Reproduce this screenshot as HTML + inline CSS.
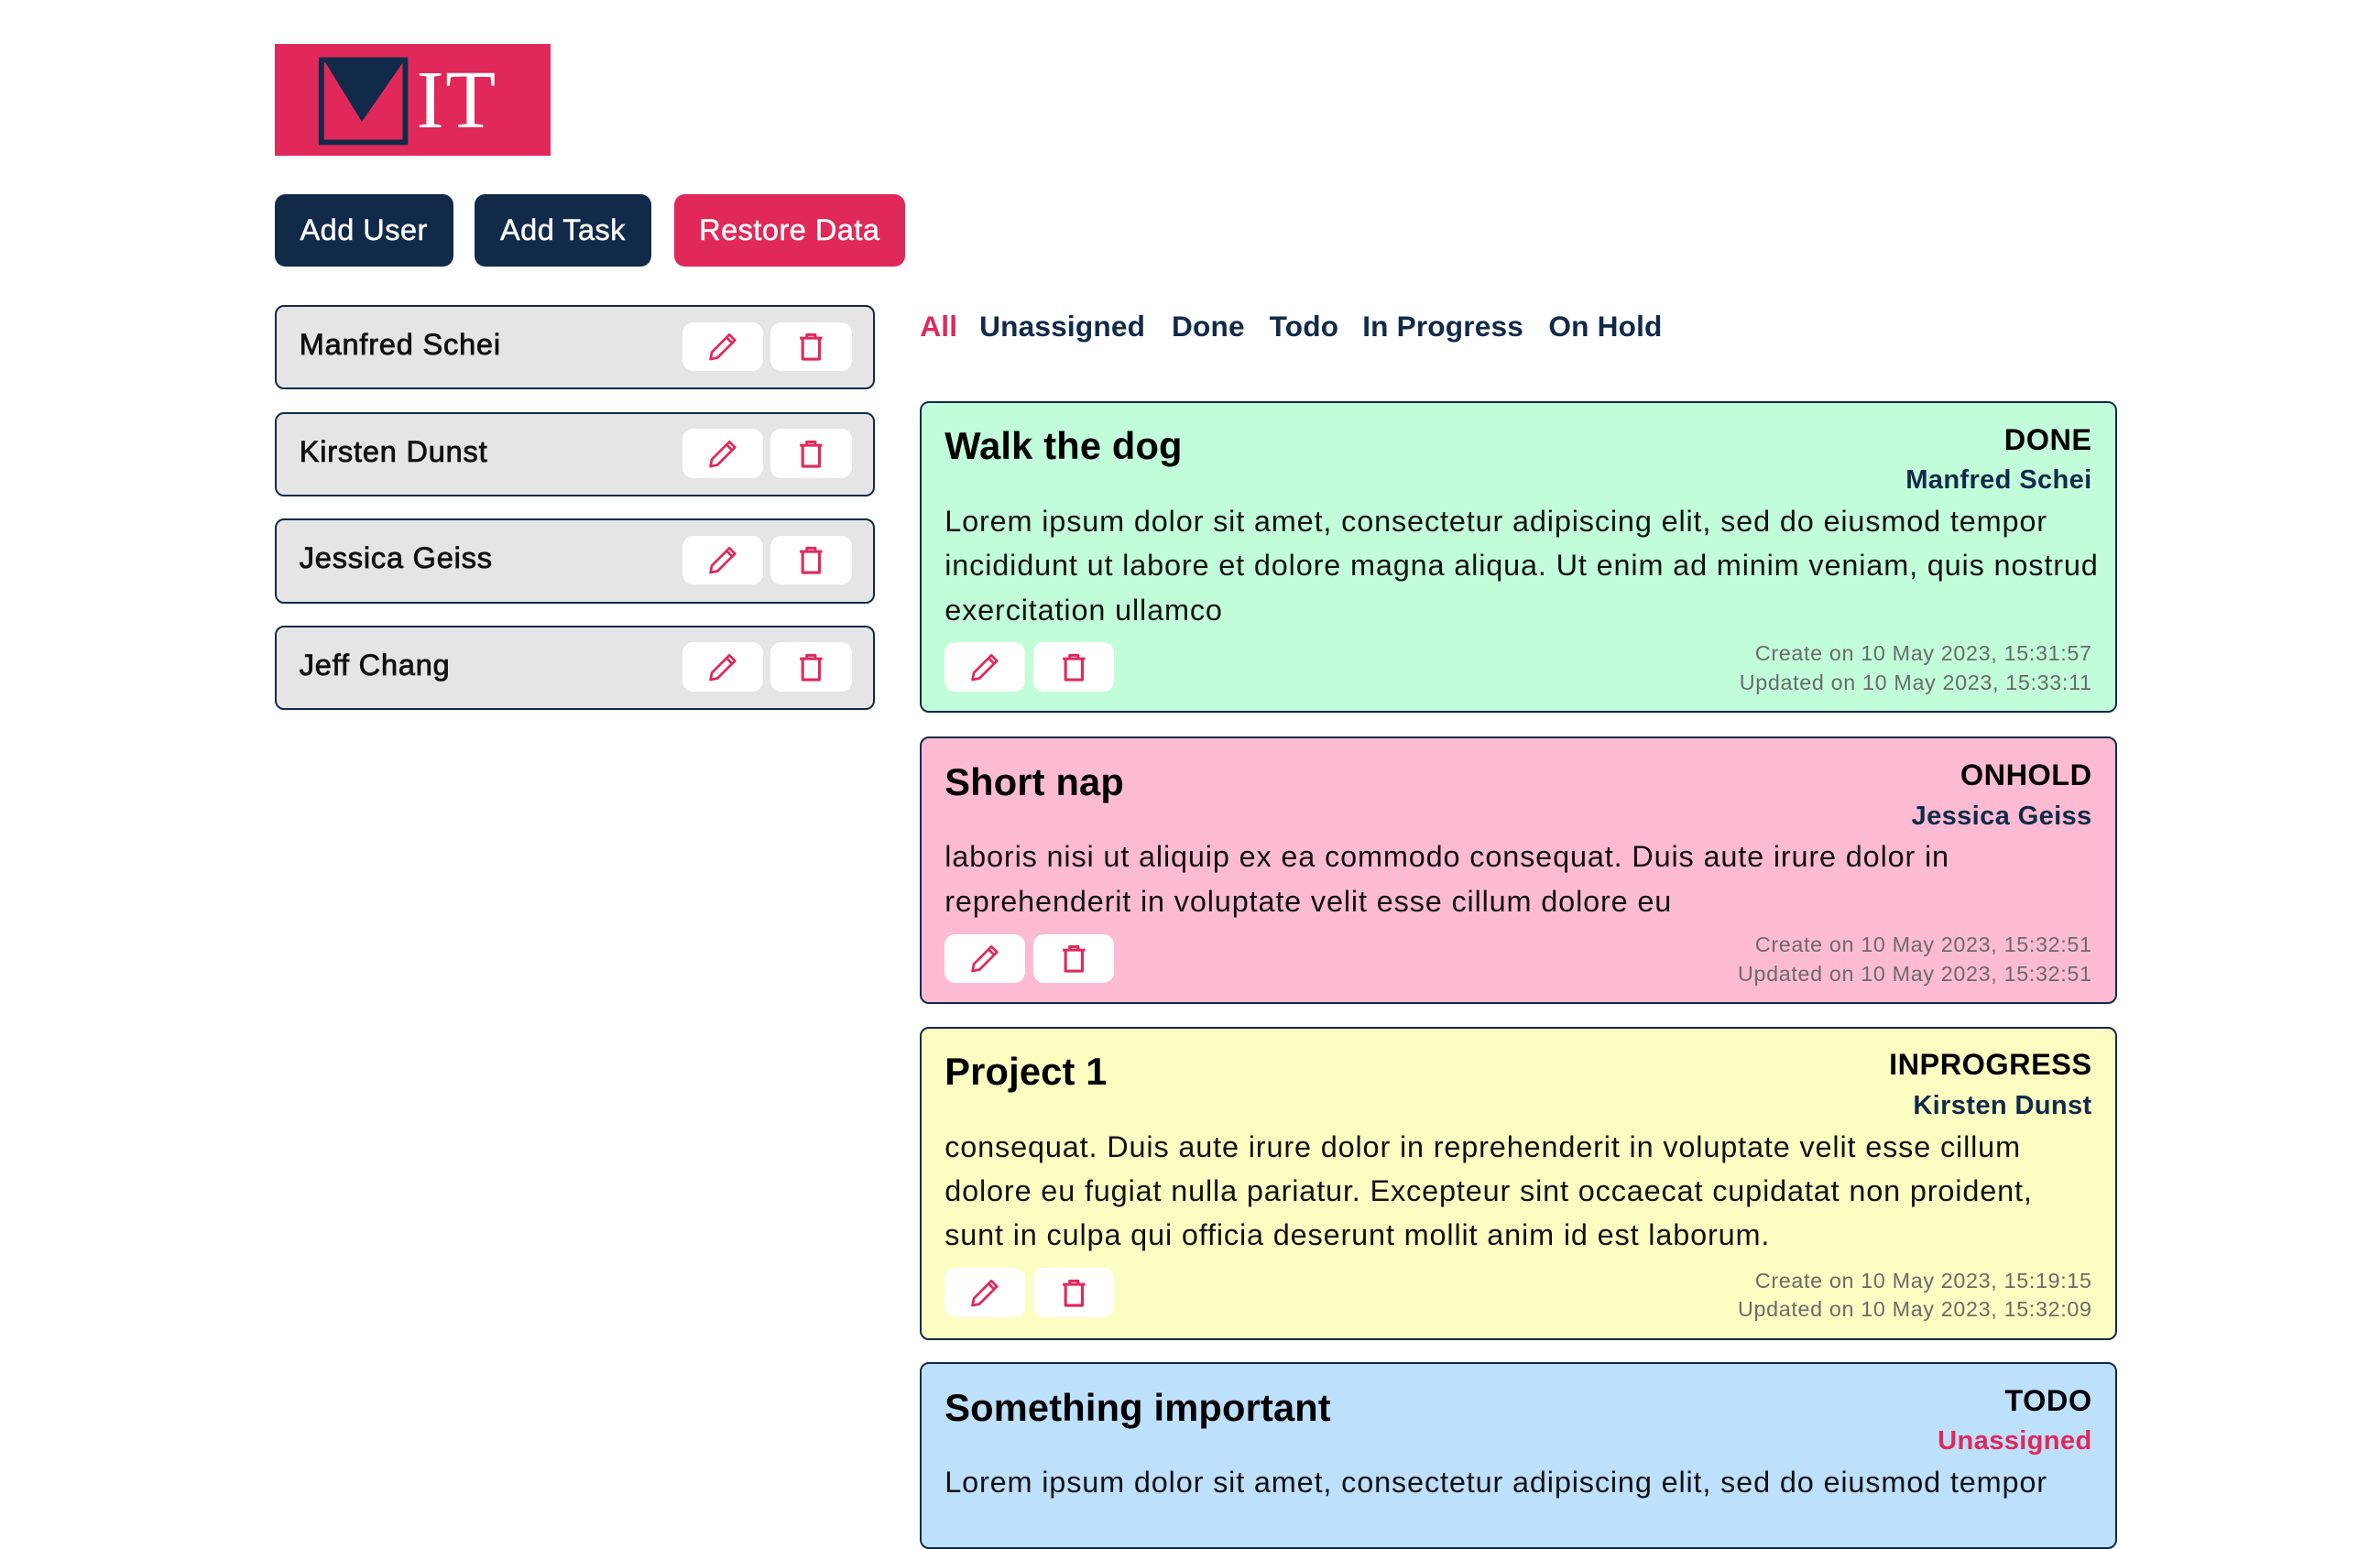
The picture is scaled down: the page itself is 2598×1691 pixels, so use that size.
<!DOCTYPE html>
<html><head><meta charset="utf-8"><style>
html,body{margin:0;padding:0;background:#fff;}
body{width:2598px;height:1602px;overflow:hidden;}
#w{zoom:1.6654;position:relative;width:1560px;height:962px;font-family:"Liberation Sans",sans-serif;color:#000;}
.a{position:absolute;white-space:nowrap;}
.btn{position:absolute;top:127px;height:48px;border-radius:7px;color:#fff;font-size:19.5px;line-height:48px;text-align:center;letter-spacing:0.3px;-webkit-text-stroke:0.3px #fff}
.user{position:absolute;left:180px;width:391px;height:53px;background:#e5e5e5;border:1.5px solid #112a4a;border-radius:6px;}
.user .n{position:absolute;left:15px;top:0;line-height:50px;font-size:19.5px;color:#111;letter-spacing:0.5px;-webkit-text-stroke:0.5px #111}
.ib{position:absolute;width:53px;height:32px;background:#fff;border-radius:7px;display:flex;align-items:center;justify-content:center;}
.tab{position:absolute;top:203px;font-size:19px;font-weight:bold;color:#112a4a;letter-spacing:0.1px}
.card{position:absolute;left:603px;width:782px;border:1.5px solid #112a4a;border-radius:6px;overflow:hidden;}
.t{position:absolute;left:15px;top:14px;font-size:25px;font-weight:bold;letter-spacing:0.1px;}
.s{position:absolute;right:15px;top:13px;font-size:19.5px;font-weight:bold;letter-spacing:0.3px}
.as{position:absolute;right:15px;top:41px;font-size:17.5px;color:#112a4a;font-weight:bold;letter-spacing:0.2px}
.b{position:absolute;left:15px;top:63px;font-size:19.5px;line-height:29px;white-space:nowrap;letter-spacing:0.5px;color:#111}
.d{position:absolute;right:15px;font-size:14px;line-height:19px;color:#6b6b6b;text-align:right;letter-spacing:0.4px}
</style></head><body><div id="w">
<div class="a" style="left:180px;top:29px;width:181px;height:73px;background:#e0295a;">
<svg width="181" height="73" style="position:absolute;left:0;top:0">
<rect x="30.5" y="10.5" width="55" height="54" fill="none" stroke="#112a4a" stroke-width="3.5"/>
<polygon points="33,12 84,12 57,51" fill="#112a4a"/>
</svg>
<div class="a" style="left:93px;top:7px;font-family:'Liberation Serif',serif;font-size:54px;color:#fff;line-height:60px;letter-spacing:1px">IT</div>
</div>
<div class="btn" style="left:180px;width:117px;background:#112a4a">Add User</div>
<div class="btn" style="left:311px;width:116px;background:#112a4a">Add Task</div>
<div class="btn" style="left:442px;width:151px;background:#e0295a">Restore Data</div>

<svg width="0" height="0" style="position:absolute"><defs>
<symbol id="pen" viewBox="0 0 24 24"><path d="M16.5 3.5l4 4L8 20l-5 1 1-5z M14.5 5.5l4 4" fill="none" stroke="#e0295a" stroke-width="1.8" stroke-linejoin="round"/></symbol>
<symbol id="bin" viewBox="0 0 24 24"><path d="M4 6h16 M9 6V3.5h6V6 M6 6v15h12V6" fill="none" stroke="#e0295a" stroke-width="2" stroke-linejoin="round"/></symbol>
</defs></svg>

<div class="user" style="top:200px"><div class="n">Manfred Schei</div><div class="ib" style="left:266px;top:10px"><svg width="22" height="22"><use href="#pen"/></svg></div><div class="ib" style="left:324px;top:10px"><svg width="22" height="22"><use href="#bin"/></svg></div></div>
<div class="user" style="top:270px"><div class="n">Kirsten Dunst</div><div class="ib" style="left:266px;top:10px"><svg width="22" height="22"><use href="#pen"/></svg></div><div class="ib" style="left:324px;top:10px"><svg width="22" height="22"><use href="#bin"/></svg></div></div>
<div class="user" style="top:340px"><div class="n">Jessica Geiss</div><div class="ib" style="left:266px;top:10px"><svg width="22" height="22"><use href="#pen"/></svg></div><div class="ib" style="left:324px;top:10px"><svg width="22" height="22"><use href="#bin"/></svg></div></div>
<div class="user" style="top:410px"><div class="n">Jeff Chang</div><div class="ib" style="left:266px;top:10px"><svg width="22" height="22"><use href="#pen"/></svg></div><div class="ib" style="left:324px;top:10px"><svg width="22" height="22"><use href="#bin"/></svg></div></div>

<div class="tab" style="left:603px;color:#e0295a">All</div>
<div class="tab" style="left:642px">Unassigned</div>
<div class="tab" style="left:768px">Done</div>
<div class="tab" style="left:832px">Todo</div>
<div class="tab" style="left:893px">In Progress</div>
<div class="tab" style="left:1015px">On Hold</div>

<div class="card" style="top:263px;height:202px;background:#c1fdd9">
<div class="t">Walk the dog</div><div class="s">DONE</div><div class="as">Manfred Schei</div>
<div class="b">Lorem ipsum dolor sit amet, consectetur adipiscing elit, sed do eiusmod tempor<br>incididunt ut labore et dolore magna aliqua. Ut enim ad minim veniam, quis nostrud<br>exercitation ullamco</div>
<div class="ib" style="left:15px;top:157px"><svg width="22" height="22"><use href="#pen"/></svg></div><div class="ib" style="left:73px;top:157px"><svg width="22" height="22"><use href="#bin"/></svg></div>
<div class="d" style="top:155px">Create on 10 May 2023, 15:31:57<br>Updated on 10 May 2023, 15:33:11</div>
</div>

<div class="card" style="top:483px;height:173px;background:#fdbbd3">
<div class="t">Short nap</div><div class="s">ONHOLD</div><div class="as">Jessica Geiss</div>
<div class="b">laboris nisi ut aliquip ex ea commodo consequat. Duis aute irure dolor in<br>reprehenderit in voluptate velit esse cillum dolore eu</div>
<div class="ib" style="left:15px;top:128px"><svg width="22" height="22"><use href="#pen"/></svg></div><div class="ib" style="left:73px;top:128px"><svg width="22" height="22"><use href="#bin"/></svg></div>
<div class="d" style="top:126px">Create on 10 May 2023, 15:32:51<br>Updated on 10 May 2023, 15:32:51</div>
</div>

<div class="card" style="top:673px;height:203px;background:#fcfdc1">
<div class="t">Project 1</div><div class="s">INPROGRESS</div><div class="as">Kirsten Dunst</div>
<div class="b">consequat. Duis aute irure dolor in reprehenderit in voluptate velit esse cillum<br>dolore eu fugiat nulla pariatur. Excepteur sint occaecat cupidatat non proident,<br>sunt in culpa qui officia deserunt mollit anim id est laborum.</div>
<div class="ib" style="left:15px;top:157px"><svg width="22" height="22"><use href="#pen"/></svg></div><div class="ib" style="left:73px;top:157px"><svg width="22" height="22"><use href="#bin"/></svg></div>
<div class="d" style="top:156px">Create on 10 May 2023, 15:19:15<br>Updated on 10 May 2023, 15:32:09</div>
</div>

<div class="card" style="top:893px;height:120px;background:#bde0fd">
<div class="t">Something important</div><div class="s">TODO</div><div class="as" style="color:#e0295a">Unassigned</div>
<div class="b">Lorem ipsum dolor sit amet, consectetur adipiscing elit, sed do eiusmod tempor</div>
</div>
</div></body></html>
